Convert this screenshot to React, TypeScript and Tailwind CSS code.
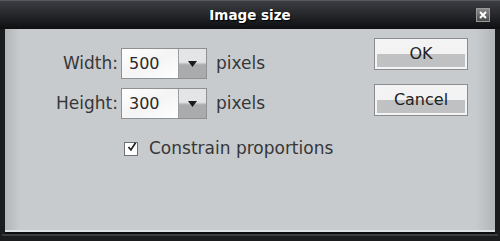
import React from 'react';

const font = { fontFamily: '"DejaVu Sans", Verdana, sans-serif' };

function SizeField({ value }: { value: string }) {
  return (
    <div className="flex h-[31px] w-[86px] border border-[#8e9194] bg-white">
      <div className="flex flex-1 items-center bg-gradient-to-br from-[#ffffff] via-[#f4f4f4] to-[#ffffff] pl-[7px] text-[16px] text-[#2a2a2a]">
        {value}
      </div>
      <div className="flex w-[28px] items-center justify-center border-l border-[#9a9c9f] bg-gradient-to-b from-[#e4e5e6] from-45% to-[#a9abad] to-55%">
        <svg width="9" height="6" viewBox="0 0 9 6">
          <path d="M0 0H9L4.5 6Z" fill="#1a1a1a" />
        </svg>
      </div>
    </div>
  );
}

function DlgButton({ label }: { label: string }) {
  return (
    <button className="h-[32px] w-[94px] border border-[#8a8c8f] bg-[#f4f4f4] p-[2px]">
      <div className="flex h-full w-full items-center justify-center bg-gradient-to-b from-[#f3f3f3] from-50% to-[#bfc1c3] to-50% text-[16px] text-[#222]">
        {label}
      </div>
    </button>
  );
}

export default function App() {
  return (
    <div className="flex h-[241px] w-[500px] flex-col bg-[#1b1c1e]" style={font}>
      <div className="grid h-[29px] grid-cols-[1fr_auto_1fr] items-center border-t border-[#55575b] bg-gradient-to-b from-[#3b3d42] via-[#25272b] to-[#0e0f11] px-[10px]">
        <div />
        <div className="text-[13.5px] font-bold text-white [text-shadow:1px_1px_1px_#000]">Image size</div>
        <div className="flex justify-end">
          <div className="flex h-[14px] w-[14px] items-center justify-center border border-[#9a9a9a] bg-gradient-to-b from-[#8a8a8a] to-[#4a4a4a]">
            <svg width="8" height="8" viewBox="0 0 8 8">
              <path d="M1 1L7 7M7 1L1 7" stroke="#fff" strokeWidth="2" />
            </svg>
          </div>
        </div>
      </div>
      <div className="mx-[5px] flex h-[205px] border-b-2 border-[#0c0c0d] bg-[linear-gradient(to_right,#b3b6b9,#c8cbce_3%,#c8cbce_96%,#b3b6b9)] shadow-[inset_0_-2px_0_#dde0e3]">
        <div className="flex flex-1 flex-col pt-[19px]">
          <div className="grid w-max grid-cols-[116px_auto_auto] items-center gap-y-[9px] text-[17px] text-[#363738]">
            <div className="pr-[3px] text-right">Width:</div>
            <SizeField value="500" />
            <div className="pl-[9px]">pixels</div>
            <div className="pr-[3px] text-right">Height:</div>
            <SizeField value="300" />
            <div className="pl-[9px]">pixels</div>
          </div>
          <div className="mt-[17px] flex items-center pl-[119px] text-[17px] text-[#363738]">
            <div className="flex h-[14px] w-[14px] items-center justify-center border border-[#6d6f72] bg-white">
              <svg width="14" height="14" viewBox="0 0 14 14" className="-mt-[4px] ml-[2px]">
                <path d="M2 7L5.5 11L12 1" stroke="#222" strokeWidth="2.4" fill="none" />
              </svg>
            </div>
            <span className="ml-[11px]">Constrain proportions</span>
          </div>
        </div>
        <div className="flex flex-col gap-[14px] pr-[27px] pt-[9px]">
          <DlgButton label="OK" />
          <DlgButton label="Cancel" />
        </div>
      </div>
      <div className="mx-[2px] h-[2px] bg-[#3c3d40]" />
    </div>
  );
}
